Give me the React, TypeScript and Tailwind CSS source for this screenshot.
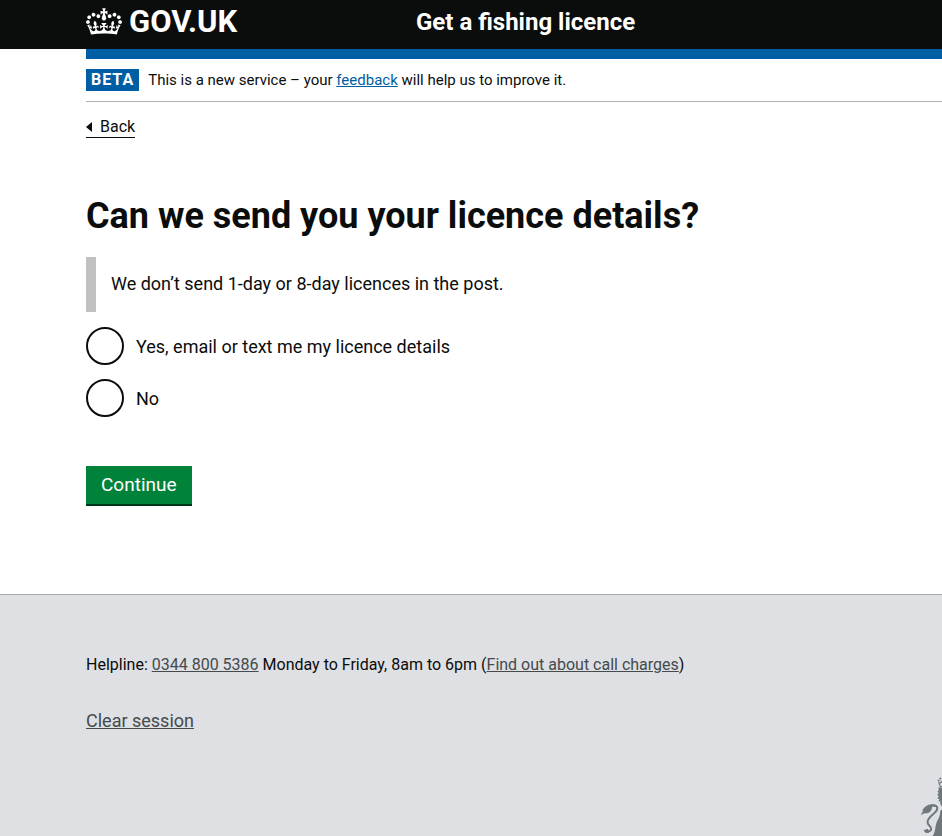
import { useState } from "react";

const deliveryOptions = [
  { id: "delivery-yes", value: "yes", label: "Yes, email or text me my licence details" },
  { id: "delivery-no", value: "no", label: "No" },
];

function Crown() {
  return (
    <svg viewBox="0 0 132 97" className="h-[27px] w-9 shrink-0" fill="currentColor" fillRule="evenodd" aria-hidden="true">
      <path d="M25 30.2c3.5 1.5 7.7-.2 9.1-3.7 1.5-3.6-.2-7.8-3.9-9.2-3.6-1.4-7.6.3-9.1 3.9-1.4 3.5.3 7.5 3.9 9zM9 39.5c3.6 1.5 7.8-.2 9.2-3.7 1.5-3.6-.2-7.8-3.9-9.1-3.6-1.5-7.6.2-9.1 3.8-1.4 3.5.3 7.5 3.8 9zM4.4 57.2c3.5 1.5 7.7-.2 9.1-3.8 1.5-3.6-.2-7.7-3.9-9.1-3.5-1.5-7.6.3-9.1 3.8-1.4 3.5.3 7.6 3.9 9.1zm38.3-21.4c3.5 1.5 7.7-.2 9.1-3.8 1.5-3.6-.2-7.7-3.9-9.1-3.6-1.5-7.6.3-9.1 3.8-1.3 3.6.4 7.7 3.9 9.1zm64.4-5.6c-3.6 1.5-7.8-.2-9.1-3.7-1.5-3.6.2-7.8 3.8-9.2 3.6-1.4 7.7.3 9.2 3.9 1.3 3.5-.4 7.5-3.9 9zm15.9 9.3c-3.6 1.5-7.7-.2-9.1-3.7-1.5-3.6.2-7.8 3.7-9.1 3.6-1.5 7.7.2 9.2 3.8 1.5 3.5-.3 7.5-3.8 9zm4.7 17.7c-3.6 1.5-7.8-.2-9.2-3.8-1.5-3.6.2-7.7 3.9-9.1 3.6-1.5 7.7.3 9.2 3.8 1.3 3.5-.4 7.6-3.9 9.1zM89.3 35.8c-3.6 1.5-7.8-.2-9.2-3.8-1.4-3.6.2-7.7 3.9-9.1 3.6-1.5 7.7.3 9.2 3.8 1.4 3.6-.3 7.7-3.9 9.1zM69.7 17.7l8.9 4.7V9.3l-8.9 2.8c-.2-.3-.5-.6-.9-.9L72.4 0H59.6l3.5 11.2c-.3.3-.6.5-.9.9l-8.8-2.8v13.1l8.8-4.7c.3.3.6.7.9.9l-5 15.4v.1c-.2.8-.4 1.6-.4 2.4 0 4.1 3.1 7.5 7 8.1h.2c.3 0 .7.1 1 .1.4 0 .7 0 1-.1h.2c4-.6 7.1-4.1 7.1-8.1 0-.8-.1-1.7-.4-2.4V34l-5.1-15.4c.4-.2.7-.6 1-.9zM66 92.8c16.9 0 32.8 1.1 47.1 3.2 4-16.9 8.9-26.7 14-33.5l-9.6-3.4c1 4.9 1.1 7.2 0 10.2-1.5-1.4-3-4.3-4.2-8.7L108.6 76c2.8-2 5-3.2 7.5-3.3-4.4 9.4-10 11.9-13.6 11.2-4.3-.8-6.3-4.6-5.6-7.9 1-4.7 5.7-5.9 8-.5 4.3-8.7-3-11.4-7.6-8.8 7.1-7.2 7.9-13.5 2.1-21.1-8 6.1-8.1 12.3-4.5 20.8-4.7-5.4-12.1-2.5-9.5 6.2 3.4-5.2 7.9-2 7.2 3.1-.6 4.3-6.4 7.8-13.5 7.2-10.3-.9-10.9-8-11.2-13.8 2.5-.5 7.1 1.8 11 7.3L80.2 60c-4.1 4.4-8 5.3-12.3 5.4 1.4-4.4 8-11.6 8-11.6H55.5s6.4 7.2 7.9 11.6c-4.2-.1-8-1-12.3-5.4l1.4 16.4c3.9-5.5 8.5-7.7 10.9-7.3-.3 5.8-.9 12.8-11.1 13.8-7.2.6-12.9-2.9-13.5-7.2-.7-5 3.8-8.3 7.1-3.1 2.7-8.7-4.6-11.6-9.4-6.2 3.7-8.5 3.6-14.7-4.6-20.8-5.8 7.6-5 13.9 2.2 21.1-4.7-2.6-11.9.1-7.7 8.8 2.3-5.5 7.1-4.2 8.1.5.7 3.3-1.3 7.1-5.7 7.9-3.5.7-9-1.8-13.5-11.2 2.5.1 4.7 1.3 7.5 3.3l-4.7-15.4c-1.2 4.4-2.7 7.2-4.3 8.7-1.1-3-.9-5.3 0-10.2l-9.5 3.4c5 6.9 9.9 16.7 14 33.5 14.8-2.1 30.8-3.2 47.7-3.2z" />
    </svg>
  );
}

// Left edge of the royal arms: the lion's crown, mane and tail
function LionCrest() {
  return (
    <svg viewBox="0 0 22 60" className="h-[60px] w-[22px] shrink-0 self-end text-[#6f777b]" fill="currentColor" aria-hidden="true">
      <circle cx="18.6" cy="4.4" r="1" />
      <circle cx="20.4" cy="2.6" r="1" />
      <path d="M18 5.8l1.400.6L22 4.6v1.600l-2 1.500.5 2.300H22v1h-2.200z" />
      <path d="M18.200 11.500H22V31l-1.800-3.500.2-2.300-1.900.4.9-2.800-2 .2 1.300-2.900-1.500-1 1.500-2.100-1.200-1.600 1.400-1.400z" />
      <path d="M1 39.500c.4-2.400 1.400-3.600 2.800-4.700l-1.500.1c1.400-3.600 4.900-6.500 9.700-6.600 2.300 0 4.400.9 4.800 2.600l-4.800-.5c.4 4.400-3.200 7.300-7 6.900C3.400 37.400 2.200 38.200 1 39.500z" />
      <path d="M11 29.600c4.800-1.200 7 .8 6 4-1.300 4.200-8.300 6.400-9.400 11.800-.9 4.400 4.500 4.500 3.600 7.800-.5 1.700-2.600 2.600-5.200 2.200" fill="none" stroke="currentColor" strokeWidth="2" />
      <path d="M3.500 54.200l4.500-1.400 1 4.200-3.500-.2z" />
      <path d="M22 33.500V60h-9.500c1.500-1.600 2.200-3.800 2.600-6.400.6-4.600 1.200-7.600 3.400-11.200 1.300-2.400 1.700-5 1.700-7.400z" />
    </svg>
  );
}

function Header() {
  return (
    <header className="bg-[#0b0c0c] text-white">
      <div className="ml-[86px] flex h-[49px] flex-wrap items-start overflow-hidden">
        <a href="#" className="flex h-[43px] w-[330px] items-center gap-[7px]">
          <Crown />
          <span className="text-[31px] leading-[30px] font-bold">GOV.UK</span>
        </a>
        <a href="#" className="flex h-[43px] items-center text-2xl leading-[30px] font-bold">
          Get a fishing licence
        </a>
      </div>
    </header>
  );
}

function PhaseBanner() {
  return (
    <div className="flex items-center gap-[9px] border-b border-[#b1b4b6] py-[10px]">
      <strong className="bg-[#005ea5] px-[5px] text-base leading-[22px] font-bold tracking-[1px] text-white">BETA</strong>
      <p className="text-[15px] leading-[22px]">
        This is a new service – your{" "}
        <a href="#" className="text-[#005ea5] underline">
          feedback
        </a>{" "}
        will help us to improve it.
      </p>
    </div>
  );
}

export default function App() {
  const [delivery, setDelivery] = useState("");

  return (
    <div className="flex min-h-screen flex-col overflow-x-hidden bg-white font-['Roboto','Noto_Sans',sans-serif] text-[#0b0c0c]">
      <Header />
      <div className="ml-[86px] border-t-10 border-[#005ea5]">
        <PhaseBanner />
        <a href="#" className="mt-[15px] inline-flex items-center gap-2 border-b border-[#0b0c0c] text-base leading-5">
          <svg viewBox="0 0 6 10" className="h-[10px] w-[6px]" fill="currentColor" aria-hidden="true">
            <path d="M0 5l6-5v10z" />
          </svg>
          Back
        </a>
        <main className="pt-[52px] pr-8 pb-[88px]">
          <form onSubmit={(event) => event.preventDefault()}>
            <fieldset>
              <legend className="text-4xl leading-[50px] font-bold">Can we send you your licence details?</legend>
              <p className="mt-4 border-l-10 border-[#bfc1c3] pt-[14px] pb-4 pl-[15px] text-lg leading-[25px]">
                We don’t send 1-day or 8-day licences in the post.
              </p>
              <div className="mt-[15px] flex flex-col gap-[14px]">
                {deliveryOptions.map((option) => (
                  <div key={option.id} className="flex items-center gap-3">
                    <input
                      type="radio"
                      id={option.id}
                      name="delivery"
                      value={option.value}
                      checked={delivery === option.value}
                      onChange={() => setDelivery(option.value)}
                      className="size-[38px] shrink-0 appearance-none rounded-full border-2 border-[#0b0c0c] bg-white checked:bg-[#0b0c0c] checked:bg-clip-content checked:p-2"
                    />
                    <label htmlFor={option.id} className="text-lg leading-[25px]">
                      {option.label}
                    </label>
                  </div>
                ))}
              </div>
            </fieldset>
            <button type="submit" className="mt-[49px] border-b-2 border-[#003618] bg-[#00823b] px-[15px] text-[19px] leading-[38px] text-white">
              Continue
            </button>
          </form>
        </main>
      </div>
      <footer className="flex flex-1 justify-between border-t border-[#a1acb2] bg-[#dee0e4] pl-[86px]">
        <div className="pt-[59px] pb-24">
          <p className="text-base leading-[22px]">
            Helpline:{" "}
            <a href="#" className="text-[#454a4d] underline">
              0344 800 5386
            </a>{" "}
            Monday to Friday, 8am to 6pm (
            <a href="#" className="text-[#454a4d] underline">
              Find out about call charges
            </a>
            )
          </p>
          <a href="#" className="mt-8 inline-block text-lg leading-[25px] text-[#454a4d] underline">
            Clear session
          </a>
        </div>
        <LionCrest />
      </footer>
    </div>
  );
}
